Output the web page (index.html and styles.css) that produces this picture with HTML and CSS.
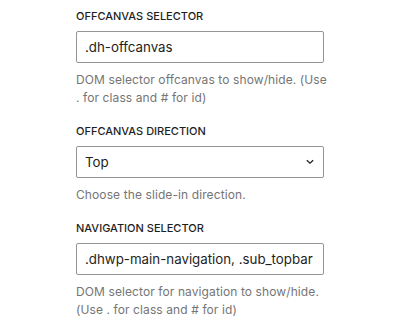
FILE: index.html
```html
<!DOCTYPE html>
<html>
<head>
<meta charset="utf-8">
<link rel="stylesheet" href="styles.css">
</head>
<body>
<div class="panel">
  <div class="control">
    <label class="label">Offcanvas Selector</label>
    <div class="field">.dh-offcanvas</div>
    <p class="help">DOM selector offcanvas to show/hide. (Use<br>. for class and # for id)</p>
  </div>
  <div class="control">
    <label class="label">Offcanvas Direction</label>
    <div class="field select">
      <span>Top</span>
      <svg class="chev" width="10" height="6" viewBox="0 0 10 6"><path d="M1.8 1.3 L5 4.3 L8.2 1.3" fill="none" stroke="#1e1e1e" stroke-width="1.2"/></svg>
    </div>
    <p class="help">Choose the slide-in direction.</p>
  </div>
  <div class="control">
    <label class="label">Navigation Selector</label>
    <div class="field">.dhwp-main-navigation, .sub_topbar</div>
    <p class="help">DOM selector for navigation to show/hide.<br>(Use . for class and # for id)</p>
  </div>
</div>
</body>
</html>
```
FILE: styles.css
```css
html, body {
  margin: 0;
  padding: 0;
  background: #ffffff;
}
body {
  font-family: Inter, "Liberation Sans", sans-serif;
  color: #1e1e1e;
}
.panel {
  width: 248px;
  padding: 8px 0 0 76px;
  display: flex;
  flex-direction: column;
  gap: 16px;
}
.control {
  display: flex;
  flex-direction: column;
}
.label {
  display: block;
  font-size: 11px;
  font-weight: 500;
  text-transform: uppercase;
  line-height: 16px;
  height: 16px;
  margin-bottom: 7px;
  color: #1e1e1e;
}
.field {
  box-sizing: border-box;
  height: 32px;
  border: 1px solid #949494;
  border-radius: 2px;
  padding: 0 8px;
  font-size: 13.3px;
  line-height: 30px;
  color: #1e1e1e;
  white-space: nowrap;
  overflow: hidden;
}
.select {
  display: flex;
  align-items: center;
  justify-content: space-between;
  padding-right: 8px;
}
.chev {
  display: block;
}
.help {
  margin: 8px 0 0 0;
  font-size: 12px;
  letter-spacing: 0.1px;
  line-height: 18px;
  color: #757575;
  white-space: nowrap;
}
```
